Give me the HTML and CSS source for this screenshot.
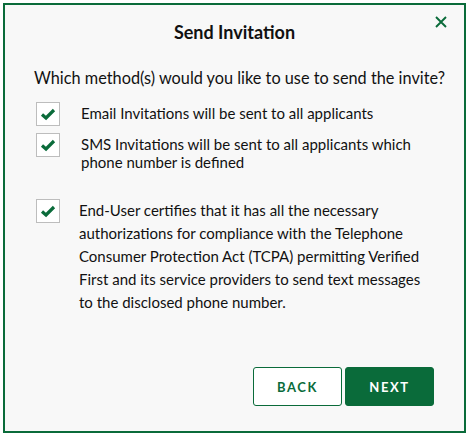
FILE: index.html
```html
<!DOCTYPE html>
<html>
<head>
<meta charset="utf-8">
<link rel="stylesheet" href="styles.css">
</head>
<body>
<div class="modal">
  <button class="close" aria-label="Close">
    <svg width="12" height="12" viewBox="0 0 12 12"><path d="M1 1L11 11M11 1L1 11" stroke="#0a6b3a" stroke-width="1.9" fill="none"/></svg>
  </button>
  <h2 class="title">Send Invitation</h2>
  <p class="question">Which method(s) would you like to use to send the invite?</p>
  <div class="options">
    <label class="option">
      <span class="box"><svg width="16" height="14" viewBox="0 0 16 14"><path d="M2 7.5L6 11L14 3" stroke="#0a6b3a" stroke-width="3.2" fill="none"/></svg></span>
      <span class="text">Email Invitations will be sent to all applicants</span>
    </label>
    <label class="option">
      <span class="box"><svg width="16" height="14" viewBox="0 0 16 14"><path d="M2 7.5L6 11L14 3" stroke="#0a6b3a" stroke-width="3.2" fill="none"/></svg></span>
      <span class="text">SMS Invitations will be sent to all applicants which phone number is defined</span>
    </label>
  </div>
  <label class="option consent">
    <span class="box"><svg width="16" height="14" viewBox="0 0 16 14"><path d="M2 7.5L6 11L14 3" stroke="#0a6b3a" stroke-width="3.2" fill="none"/></svg></span>
    <span class="text">End-User certifies that it has all the necessary authorizations for compliance with the Telephone Consumer Protection Act (TCPA) permitting Verified First and its service providers to send text messages to the disclosed phone number.</span>
  </label>
  <div class="actions">
    <button class="btn btn-outline">BACK</button>
    <button class="btn btn-primary">NEXT</button>
  </div>
</div>
</body>
</html>
```

FILE: styles.css
```css
html, body { margin: 0; padding: 0; background: #ffffff; }
body { padding: 3px; font-family: "Lato", "Noto Sans", sans-serif; color: #111; }
.modal {
  position: relative;
  width: 459px;
  height: 426px;
  border: 2px solid #0a6b3a;
  background: #f8f8f8;
  box-sizing: content-box;
  display: flex;
  flex-direction: column;
}
.close {
  position: absolute;
  top: 11px;
  right: 17px;
  border: 0;
  background: none;
  padding: 0;
  width: 12px;
  height: 12px;
  display: flex;
}
.title {
  margin: 15px 0 0;
  text-align: center;
  font-size: 18px;
  font-weight: 700;
  line-height: 24px;
}
.question {
  margin: 23px 0 0 29px;
  font-size: 16.3px;
  line-height: 22px;
}
.options { margin: 13px 0 0 31px; display: flex; flex-direction: column; gap: 7px; }
.option { display: flex; align-items: flex-start; }
.box {
  width: 22px; height: 22px; flex: none;
  border: 1px solid #bdbdbd; background: #fff;
  display: flex; align-items: center; justify-content: center;
}
.text { font-size: 15px; line-height: 18px; margin-left: 21px; padding-top: 2px; max-width: 340px; }
.consent { margin: 28px 0 0 31px; }
.consent .text { line-height: 23px; margin-left: 19px; padding-top: 0; width: 350px; max-width: none; }
.actions {
  margin-top: auto;
  margin-bottom: 25px;
  display: flex;
  justify-content: flex-end;
  gap: 3px;
  padding-right: 30px;
}
.btn {
  width: 89px; height: 39px;
  border-radius: 3px;
  font-family: "Lato", "Noto Sans", sans-serif;
  font-size: 13px; font-weight: 700; letter-spacing: 1.6px;
  box-sizing: border-box;
}
.btn-outline { border: 1px solid #0a6b3a; background: #fff; color: #0a6b3a; }
.btn-primary { border: 1px solid #0a6b3a; background: #0a6b3a; color: #fff; }
```
